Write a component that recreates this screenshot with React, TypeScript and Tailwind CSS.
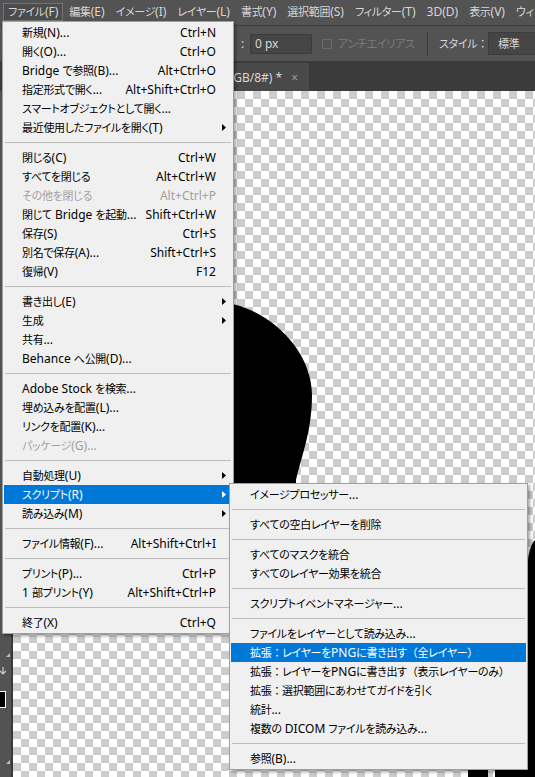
import React from 'react';

type MenuEntry =
  | { label: string; shortcut?: string; sub?: boolean; disabled?: boolean; active?: boolean }
  | 'sep';

const fileMenu: MenuEntry[] = [
  { label: '新規(N)...', shortcut: 'Ctrl+N' },
  { label: '開く(O)...', shortcut: 'Ctrl+O' },
  { label: 'Bridge で参照(B)...', shortcut: 'Alt+Ctrl+O' },
  { label: '指定形式で開く...', shortcut: 'Alt+Shift+Ctrl+O' },
  { label: 'スマートオブジェクトとして開く...' },
  { label: '最近使用したファイルを開く(T)', sub: true },
  'sep',
  { label: '閉じる(C)', shortcut: 'Ctrl+W' },
  { label: 'すべてを閉じる', shortcut: 'Alt+Ctrl+W' },
  { label: 'その他を閉じる', shortcut: 'Alt+Ctrl+P', disabled: true },
  { label: '閉じて Bridge を起動...', shortcut: 'Shift+Ctrl+W' },
  { label: '保存(S)', shortcut: 'Ctrl+S' },
  { label: '別名で保存(A)...', shortcut: 'Shift+Ctrl+S' },
  { label: '復帰(V)', shortcut: 'F12' },
  'sep',
  { label: '書き出し(E)', sub: true },
  { label: '生成', sub: true },
  { label: '共有...' },
  { label: 'Behance へ公開(D)...' },
  'sep',
  { label: 'Adobe Stock を検索...' },
  { label: '埋め込みを配置(L)...' },
  { label: 'リンクを配置(K)...' },
  { label: 'パッケージ(G)...', disabled: true },
  'sep',
  { label: '自動処理(U)', sub: true },
  { label: 'スクリプト(R)', sub: true, active: true },
  { label: '読み込み(M)', sub: true },
  'sep',
  { label: 'ファイル情報(F)...', shortcut: 'Alt+Shift+Ctrl+I' },
  'sep',
  { label: 'プリント(P)...', shortcut: 'Ctrl+P' },
  { label: '1 部プリント(Y)', shortcut: 'Alt+Shift+Ctrl+P' },
  'sep',
  { label: '終了(X)', shortcut: 'Ctrl+Q' },
];

const scriptMenu: MenuEntry[] = [
  { label: 'イメージプロセッサー...' },
  'sep',
  { label: 'すべての空白レイヤーを削除' },
  'sep',
  { label: 'すべてのマスクを統合' },
  { label: 'すべてのレイヤー効果を統合' },
  'sep',
  { label: 'スクリプトイベントマネージャー...' },
  'sep',
  { label: 'ファイルをレイヤーとして読み込み...' },
  { label: '拡張：レイヤーをPNGに書き出す（全レイヤー）', active: true },
  { label: '拡張：レイヤーをPNGに書き出す（表示レイヤーのみ）' },
  { label: '拡張：選択範囲にあわせてガイドを引く' },
  { label: '統計...' },
  { label: '複数の DICOM ファイルを読み込み...' },
  'sep',
  { label: '参照(B)...' },
];

const menuBar = ['ファイル(F)', '編集(E)', 'イメージ(I)', 'レイヤー(L)', '書式(Y)', '選択範囲(S)', 'フィルター(T)', '3D(D)', '表示(V)', 'ウィンドウ(W)'];

// Japanese runs are set a little smaller than the latin ones, like the Windows UI font;
// full-width punctuation keeps its full em box
const cjk = /([\u3000-\u30ff\u3400-\u9fff\uff00-\uffef]+)/;
const punct = /([：（）]+)/;

function Jp({ text }: { text: string }) {
  return (
    <span>
      {text.split(cjk).map((part, i) =>
        i % 2 === 1 ? (
          <span key={i} className="text-[11px] leading-none tracking-[-0.3px]">
            {part.split(punct).map((p, j) =>
              j % 2 === 1 ? (
                <span key={j} className="[font-feature-settings:normal]">
                  {p}
                </span>
              ) : (
                p
              )
            )}
          </span>
        ) : (
          part
        )
      )}
    </span>
  );
}

function Arrow({ white }: { white?: boolean }) {
  return (
    <svg width="4" height="7" viewBox="0 0 4 7" className="absolute right-[6px] top-[6px]">
      <path d="M0 0L4 3.5L0 7Z" fill={white ? '#ffffff' : '#000000'} />
    </svg>
  );
}

function Menu({ items, className, pl }: { items: MenuEntry[]; className: string; pl: string }) {
  return (
    <div className={`absolute border border-[#a0a0a0] bg-[#f0f0f0] p-px shadow-[2px_2px_3px_rgba(0,0,0,0.35)] ${className}`}>
      {items.map((it, i) =>
        it === 'sep' ? (
          <div key={i} className="flex h-[11px] items-center px-px">
            <div className="h-px w-full bg-[#bdbdbd]" />
          </div>
        ) : (
          <div
            key={i}
            className={`relative flex h-[19px] items-center justify-between overflow-hidden whitespace-nowrap pr-[16px] ${pl} ${
              it.active ? 'bg-[#0078d7] text-white' : it.disabled ? 'text-[#a0a0a0]' : 'text-black'
            }`}
          >
            <Jp text={it.label} />
            {it.shortcut && <span>{it.shortcut}</span>}
            {it.sub && <Arrow white={it.active} />}
          </div>
        )
      )}
    </div>
  );
}

export default function App() {
  return (
    <div className="relative h-[777px] w-[535px] overflow-hidden bg-[#535353] font-['Noto_Sans','Noto_Sans_CJK_JP',sans-serif] text-[12px] leading-[19px] [font-feature-settings:'palt']">
      {/* menu bar */}
      <div className="flex h-[26px] items-center gap-[1px] border-b border-[#3e3e3e] pl-[3px] pb-[2px] text-[#d6d6d6]">
        {menuBar.map((m, i) => (
          <div
            key={m}
            className={`flex h-[18px] shrink-0 items-center whitespace-nowrap border px-[4px] ${
              i === 0 ? 'border-[#737373] bg-[#4c4c4c]' : 'border-transparent'
            }`}
          >
            <Jp text={m} />
          </div>
        ))}
      </div>

      {/* options bar */}
      <div className="flex h-[35px] items-center whitespace-nowrap pl-[239px] text-[#d6d6d6]">
        <span className="w-[11px] shrink-0 pl-[2px]">:</span>
        <div className="flex h-[20px] w-[62px] shrink-0 items-center border border-[#3c3c3c] bg-[#454545] pl-[4px]">0 px</div>
        <div className="ml-[10px] h-[10px] w-[10px] shrink-0 border border-[#6a6a6a]" />
        <span className="ml-[6px] w-[83px] shrink-0 text-[#7c7c7c]">
          <Jp text="アンチエイリアス" />
        </span>
        <div className="ml-[6px] h-[24px] w-px shrink-0 bg-[#3c3c3c]" />
        <span className="ml-[11px] w-[49px] shrink-0">
          <Jp text="スタイル：" />
        </span>
        <div className="flex h-[23px] w-[70px] shrink-0 items-center border border-[#3c3c3c] bg-[#454545] pl-[9px]">
          <Jp text="標準" />
        </div>
      </div>

      {/* document tabs */}
      <div className="flex h-[30px] items-end bg-[#3b3b3b] pl-[12px]">
        <div className="flex h-[28px] w-[297px] items-center justify-end gap-[9px] whitespace-nowrap bg-[#494949] pr-[11px] text-[#d6d6d6]">
          <Jp text="名称未設定 1 @ 66.7% (RGB/8#) *" />
          <span className="text-[#9c9c9c]">×</span>
        </div>
      </div>

      {/* workspace */}
      <div className="flex h-[686px]">
        <div className="flex w-[13px] shrink-0 flex-col border-r-2 border-[#393939] bg-[#535353] pt-[562px]">
          <svg width="4" height="4" viewBox="0 0 4 4" className="ml-[6px]">
            <path d="M4 0V4H0Z" fill="#bdbdbd" />
          </svg>
          <svg width="6" height="8" viewBox="0 0 6 8" className="mt-[10px]">
            <path d="M3 0V6M0 4L3 7L6 4" stroke="#d0d0d0" strokeWidth="1.2" fill="none" />
          </svg>
          <div className="mt-[16px] h-[17px] w-[6px] border border-l-0 border-white bg-black" />
          <svg width="4" height="4" viewBox="0 0 4 4" className="ml-[6px] mt-[52px]">
            <path d="M4 0V4H0Z" fill="#bdbdbd" />
          </svg>
        </div>
        <div className="relative flex-1 bg-[image:conic-gradient(#ffffff_25%,#cccccc_0_50%,#ffffff_0_75%,#cccccc_0)] bg-[length:16px_16px]">
          <svg className="absolute inset-0" width="522" height="686" viewBox="13 91 522 686">
            <path
              d="M110 520 L110 395 C110 340 160 302 215 302 C260 302 312 345 312 395 C312 430 302 455 296 480 L296 520 Z"
              fill="#000"
            />
            <path d="M535 540 C529 546 527 560 527 580 L527 777 L535 777 Z" fill="#000" />
            <rect x="468" y="766" width="20" height="11" fill="#000" />
            <rect x="495" y="766" width="40" height="11" fill="#000" />
          </svg>
        </div>
      </div>

      <Menu items={fileMenu} className="left-[2px] top-[21px] w-[232px]" pl="pl-[18px]" />
      <Menu items={scriptMenu} className="left-[229px] top-[483px] w-[299px]" pl="pl-[19px]" />
    </div>
  );
}
